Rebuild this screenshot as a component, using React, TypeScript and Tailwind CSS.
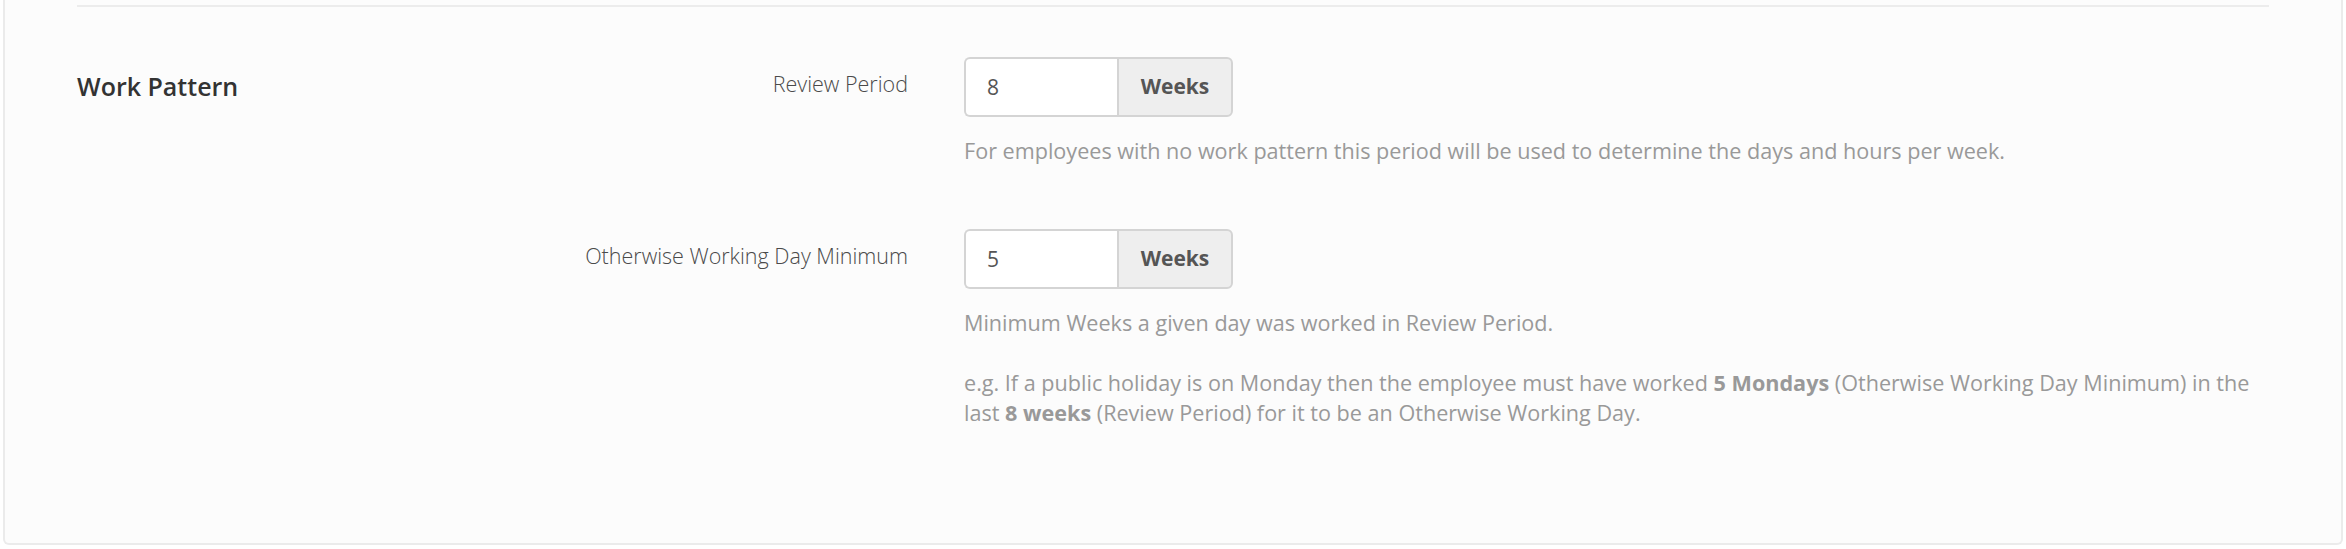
import React from 'react'

const font = { fontFamily: '"Open Sans", "Noto Sans", sans-serif' }

function WeeksInput({ value }: { value: string }) {
  return (
    <div className="flex h-[60px] w-[269px]">
      <input
        readOnly
        value={value}
        className="h-full w-[153px] rounded-l-[6px] border-2 border-r-0 border-[#d4d4d4] bg-white pl-[21px] text-[21px] text-[#555555] outline-none"
      />
      <div className="flex h-full flex-1 items-center justify-center rounded-r-[6px] border-2 border-[#d4d4d4] bg-[#eeeeee] text-[21px] font-bold text-[#555555]">
        Weeks
      </div>
    </div>
  )
}

export default function App() {
  return (
    <div className="min-h-screen bg-white" style={font}>
      <div className="mx-[3px] rounded-b-[6px] border-x-2 border-b-2 border-[#ebebeb] bg-[#fcfcfc] px-[72px] pt-[5px] pb-[115px]">
        <div className="h-[2px] bg-[#ececec]" />

        <div className="mt-[50px] flex">
          <div className="w-[300px] pt-[12px]">
            <h3 className="text-[25px] leading-[34px] font-semibold text-[#333333]">Work Pattern</h3>
          </div>

          <div className="flex-1">
            {/* Review Period */}
            <div className="flex">
              <label className="w-[531px] pt-[12px] text-right text-[21.5px] leading-[30px] font-light text-[#4a4a4a]">
                Review Period
              </label>
              <div className="ml-[56px] flex-1">
                <WeeksInput value="8" />
                <p className="mt-[19px] text-[21.6px] leading-[30px] text-[#999999]">
                  For employees with no work pattern this period will be used to determine the days and hours per week.
                </p>
              </div>
            </div>

            {/* Otherwise Working Day Minimum */}
            <div className="mt-[63px] flex">
              <label className="w-[531px] pt-[12px] text-right text-[21.5px] leading-[30px] font-light text-[#4a4a4a]">
                Otherwise Working Day Minimum
              </label>
              <div className="ml-[56px] flex-1">
                <WeeksInput value="5" />
                <p className="mt-[19px] text-[21.6px] leading-[30px] text-[#999999]">
                  Minimum Weeks a given day was worked in Review Period.
                </p>
                <p className="mt-[30px] text-[21.6px] leading-[30px] text-[#999999]">
                  e.g. If a public holiday is on Monday then the employee must have worked <b className="font-bold">5 Mondays</b> (Otherwise Working Day Minimum) in the last <b className="font-bold">8 weeks</b> (Review Period) for it to be an Otherwise Working Day.
                </p>
              </div>
            </div>
          </div>
        </div>
      </div>
    </div>
  )
}
